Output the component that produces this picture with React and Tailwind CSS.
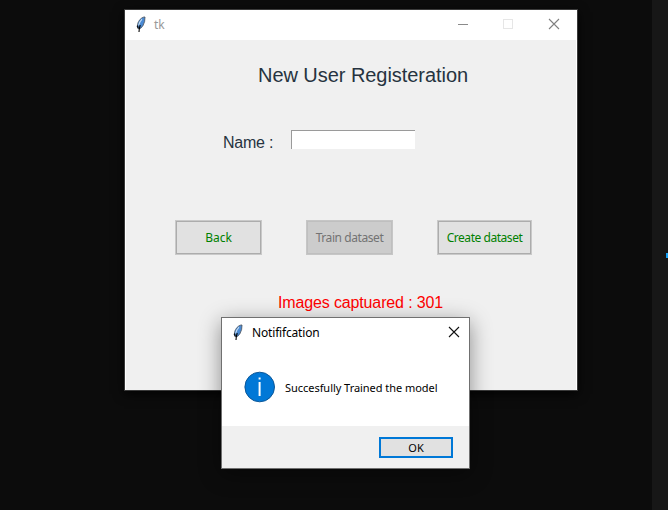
function Feather({ className }) {
  return (
    <svg className={className} width="10" height="17" viewBox="0 0 10 17">
      <path d="M9 1C6.4 .8 3.8 3 2 6.8L1.2 10.6 2.4 12.8 4.8 12.2 7 9.6 8.6 5.6Z" fill="#4a8ad4" stroke="#454e58" strokeWidth=".8" />
      <path d="M6 3.2C4.2 5 3.2 7.2 2.6 9.6" stroke="#c4ddf4" strokeWidth="1.1" fill="none" />
      <path d="M4.2 9C3.6 11 3.1 13 3 16M1.5 9.5L2.2 12.4" stroke="#000" strokeWidth="1.1" fill="none" />
    </svg>
  );
}

function Close({ color }) {
  return (
    <svg width="12" height="12" viewBox="0 0 12 12">
      <path d="M1 1l10 10M11 1L1 11" stroke={color} strokeWidth="1.1" />
    </svg>
  );
}

function Button({ className, children }) {
  return (
    <button className={`flex h-[35px] items-center justify-center border pt-px font-['Noto_Sans'] text-[12px] whitespace-nowrap outline outline-1 -outline-offset-2 ${className}`}>
      {children}
    </button>
  );
}

function MainWindow() {
  return (
    <section className="absolute left-[124px] top-[9px] flex h-[382px] w-[454px] flex-col border border-[#3a3a3a] bg-white shadow-[0_3px_10px_rgba(0,0,0,0.8)]">
      <header className="flex h-[30px] shrink-0 items-center bg-white pl-[11px] pr-[17px]">
        <Feather className="-mt-[2px]" />
        <span className="ml-2 font-['Noto_Sans'] text-[12px] text-[#999]">tk</span>
        <div className="ml-auto -mt-[2px] flex items-center">
          <div className="mr-[35px] h-px w-[10px] bg-[#8a8a8a]" />
          <div className="mr-[35px] size-[10px] border border-[#e6e6e6]" />
          <Close color="#808080" />
        </div>
      </header>
      <main className="mx-px flex grow flex-col bg-[#f0f0f0] font-['Liberation_Sans']">
        <h1 className="mt-[20px] pl-[132px] text-[20px] leading-[30px] tracking-[-0.05px] text-[#263340]">New User Registeration</h1>
        <div className="mt-[40px] flex h-[20px] pl-[97px]">
          <label className="w-[68px] pt-[3px] text-[16px] leading-[20px] tracking-[-0.25px] text-[#263340]">Name :</label>
          <input aria-label="Name" className="h-[19px] w-[124px] border-l border-t border-[#9a9a9a] bg-white" />
        </div>
        <div className="mt-[70px] flex pl-[49px]">
          <Button className="w-[87px] border-[#c9c9c9] bg-[#e1e1e1] text-[#008000] outline-[#acacac]">Back</Button>
          <Button className="ml-[44px] w-[87px] border-[#c6c6c6] bg-[#cccccc] tracking-[-0.42px] text-[#737373] outline-[#bfbfbf]">Train dataset</Button>
          <Button className="ml-[44px] w-[95px] border-[#c9c9c9] bg-[#e1e1e1] tracking-[-0.45px] text-[#008000] outline-[#acacac]">Create dataset</Button>
        </div>
        <p className="mt-[38px] pl-[152px] text-[16px] leading-[20px] tracking-[-0.14px] text-[#ff0000]">Images captuared : 301</p>
      </main>
    </section>
  );
}

function Notification() {
  return (
    <section className="absolute left-[221px] top-[317px] flex h-[152px] w-[249px] flex-col border border-[#707070] bg-white font-['Noto_Sans'] shadow-[0_5px_20px_rgba(0,0,0,0.42)]">
      <header className="flex h-[30px] shrink-0 items-center pl-[11px] pr-[9px]">
        <Feather className="-mt-[2px]" />
        <span className="ml-[9px] text-[12px] tracking-[-0.17px] text-black">Notififcation</span>
        <div className="-mt-[2px] ml-auto"><Close color="#111111" /></div>
      </header>
      <div className="flex h-[78px] items-center pl-[22px]">
        <svg width="32" height="32" viewBox="0 0 32 32">
          <circle cx="15.7" cy="16" r="14.8" fill="#0078d7" stroke="#0c5798" strokeWidth="1" />
          <path d="M15.6 11v14M15.6 6.5v2" stroke="#fff" strokeWidth="2" />
        </svg>
        <span className="ml-[9px] mt-[2px] text-[11px] tracking-[-0.04px] text-black">Succesfully Trained the model</span>
      </div>
      <footer className="flex grow items-start justify-end bg-[#f0f0f0] pr-[16px] pt-[11px]">
        <button className="flex h-[21px] w-[74px] items-center justify-center border-2 border-[#0078d7] bg-[#e1e1e1] pt-px text-[11px] text-black">OK</button>
      </footer>
    </section>
  );
}

export default function App() {
  return (
    <div className="relative flex h-[510px] w-[668px] justify-end overflow-hidden bg-[#0c0c0c]">
      <aside className="flex w-4 justify-end bg-[#171717] pt-[253px]">
        <div className="h-[5px] w-[2px] bg-[#14a0f5]" />
      </aside>
      <MainWindow />
      <Notification />
    </div>
  );
}
